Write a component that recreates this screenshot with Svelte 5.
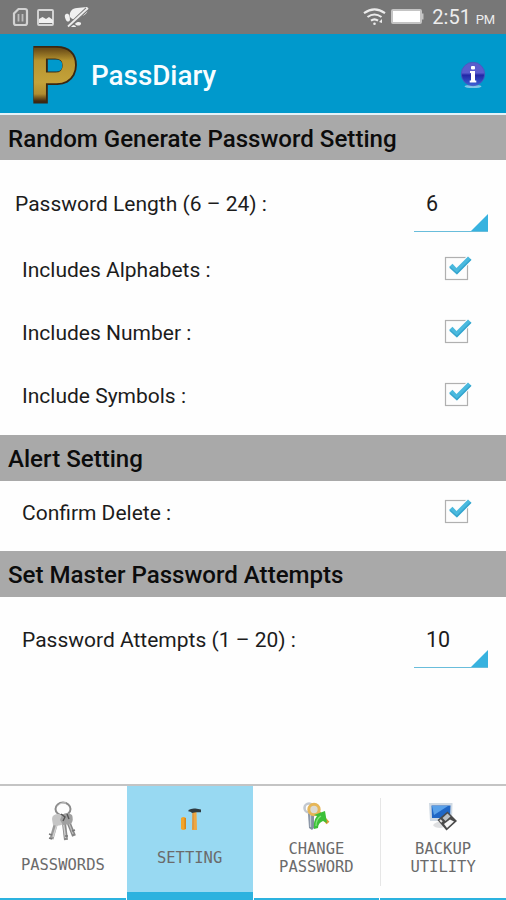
<script lang="ts">
  const passwordLength = 6;
  const passwordAttempts = 10;

  const includes = $state([
    { label: 'Includes Alphabets :', checked: true },
    { label: 'Includes Number :', checked: true },
    { label: 'Include Symbols :', checked: true }
  ]);

  let confirmDelete = $state(true);
  let activeTab = $state('setting');

  const tabs = [
    { id: 'passwords', lines: ['PASSWORDS'] },
    { id: 'setting', lines: ['SETTING'] },
    { id: 'change', lines: ['CHANGE', 'PASSWORD'] },
    { id: 'backup', lines: ['BACKUP', 'UTILITY'] }
  ];
</script>

{#snippet checkbox(checked: boolean, toggle: () => void, label: string)}
  <button class="checkbox" onclick={toggle} role="checkbox" aria-checked={checked} aria-label={label}>
    <svg width="30" height="28" viewBox="0 0 30 28">
      <rect x="2.500" y="3.500" width="22" height="22" fill="#fdfdfd" stroke="#b0b0b0" stroke-width="1.200" />
      {#if checked}
        <path d="M6 13l3.500-3.300 4 4.300L25 2.500l3.500 3.300L14 20.500z" fill="#4ab9de" stroke="#fdfdfd" stroke-width="2" paint-order="stroke" />
        <path d="M7 13.500l6.800 6L27.800 5.500" fill="none" stroke="#2c9dc8" stroke-width="1.600" opacity=".7" />
      {/if}
    </svg>
  </button>
{/snippet}

{#snippet spinner(value: number)}
  <div class="spinner">
    <span class="spinner__value">{value}</span>
    <svg class="spinner__arrow" width="17" height="17" viewBox="0 0 17 17">
      <path d="M17 0v17H0z" fill="#37b2df" />
    </svg>
  </div>
{/snippet}

<div class="app">
  <div class="status">
    <div class="status__group">
      <svg width="78" height="24" viewBox="0 0 78 24">
        <path d="M6.500 4H13q2 0 2 2v12q0 2-2 2H4q-2 0-2-2V8.500z" fill="none" stroke="#d2d2d2" stroke-width="2.200" />
        <path d="M6.500 9v7.500M10.500 9v7.500" stroke="#bdbdbd" stroke-width="1.800" />
        <rect x="26" y="5" width="15" height="15" rx="1" fill="none" stroke="#d6d6d6" stroke-width="1.900" />
        <path d="M27 18v-4l3.500-2 3.500 2 3-2 4 3v3H27z" fill="#f0f0f0" />
        <path d="M58 12c-1-5 2-9 7-9l10-1c2 4-1 8-5 9-4 4-8 5-12 1z" fill="#f0f0f0" />
        <path d="M54 9c3-1 4 2 4 6-1 2-3 2-4 0s-2-5 0-6zM63 19c2-3 7-2 6 0s-4 2-6 0zM58 21c2-2 6-1 6 1h-6z" fill="#f0f0f0" />
        <path d="M75 4L56 22" stroke="#777" stroke-width="4" />
        <path d="M76 3L56 21.500" stroke="#ececec" stroke-width="1.800" />
      </svg>
    </div>
    <div class="status__group status__group--right">
      <svg width="63" height="20" viewBox="0 0 63 20">
        <g fill="none" stroke="#ececec" stroke-width="2.1">
          <path d="M1 6.2q10.5-7.6 21 0" />
          <path d="M4.5 10q7-5 14 0" />
          <path d="M8 13.6q3.5-2.6 7 0" />
        </g>
        <circle cx="11.5" cy="16.7" r="1.3" fill="#ececec" />
        <path d="M16 15l3-3v4z" fill="#ececec" />
        <path d="M30 2h27q2 0 2 2v2.500h1.500v6H59V15q0 2-2 2H30q-2 0-2-2V4q0-2 2-2z" fill="#c4c4c4" />
        <rect x="30" y="4" width="27" height="11" fill="#fff" />
      </svg>
      <span class="status__time">2:51 <small>PM</small></span>
    </div>
  </div>

  <header class="header">
    <svg class="header__logo" width="58" height="93" viewBox="0 0 58 93">
      <defs>
        <linearGradient id="gold" x1="0" y1="0" x2="0" y2="1">
          <stop offset=".2" stop-color="#6b4d18" />
          <stop offset=".34" stop-color="#b7942f" />
          <stop offset=".6" stop-color="#c4a23a" />
          <stop offset=".74" stop-color="#b08d30" />
          <stop offset=".82" stop-color="#4a3010" />
        </linearGradient>
      </defs>
      <text class="logo logo--edge" x="4" y="73.500" textLength="46" lengthAdjust="spacingAndGlyphs">P</text>
      <text class="logo logo--face" x="3.500" y="73">P</text>
    </svg>
    <h1 class="header__title">PassDiary</h1>
    <button class="header__info" aria-label="Info">
      <svg width="26" height="28" viewBox="0 0 26 28">
        <defs>
          <linearGradient id="ball" x1="0" y1="0" x2="0" y2="1">
            <stop offset="0" stop-color="#5a5fcb" />
            <stop offset=".45" stop-color="#5a5ccf" />
            <stop offset=".55" stop-color="#2226a6" />
            <stop offset="1" stop-color="#3a63d8" />
          </linearGradient>
        </defs>
        <ellipse cx="13" cy="25.500" rx="8.500" ry="1.600" fill="#80c5e8" />
        <circle cx="13" cy="13" r="11.7" fill="url(#ball)" stroke="#4a57bd" stroke-width=".8" />
        <rect x="11" y="5" width="4" height="3.500" rx="1" fill="#fff" />
        <path d="M10 10h5v9.500h1.300v2H9.700v-2H11V12h-1z" fill="#fff" />
      </svg>
    </button>
  </header>

  <main class="content">
    <h2 class="section section--first">Random Generate Password Setting</h2>
    <div class="row row--length">
      <span class="row__label">Password Length (6 – 24) :</span>
      {@render spinner(passwordLength)}
    </div>
    {#each includes as item}
      <div class="row row--check">
        <span class="row__label">{item.label}</span>
        {@render checkbox(item.checked, () => (item.checked = !item.checked), item.label)}
      </div>
    {/each}

    <h2 class="section section--alert">Alert Setting</h2>
    <div class="row row--confirm">
      <span class="row__label">Confirm Delete :</span>
      {@render checkbox(confirmDelete, () => (confirmDelete = !confirmDelete), 'Confirm Delete')}
    </div>

    <h2 class="section">Set Master Password Attempts</h2>
    <div class="row row--attempts">
      <span class="row__label">Password Attempts (1 – 20) :</span>
      {@render spinner(passwordAttempts)}
    </div>
  </main>

  <nav class="tabs">
    {#each tabs as tab}
      <button class="tab tab--{tab.id}" class:tab--active={activeTab === tab.id} onclick={() => (activeTab = tab.id)}>
        {#if tab.id === 'passwords'}
          <svg width="32" height="42" viewBox="0 0 32 42">
            <ellipse cx="16" cy="8" rx="7.5" ry="6.5" fill="none" stroke="#8b8b8b" stroke-width="2" />
            <path d="M10 6q3-5 9-4" fill="none" stroke="#d5d5d5" stroke-width="1" />
            <path d="M9 22L4.5 38" stroke="#9a9a9a" stroke-width="4" />
            <path d="M10 23L6 36" stroke="#d0d0d0" stroke-width="1.5" />
            <path d="M17 22l2 17" stroke="#8a8a8a" stroke-width="4" />
            <path d="M16.5 22l2 15" stroke="#cecece" stroke-width="1.5" />
            <path d="M21 20l6 15" stroke="#858585" stroke-width="4" />
            <path d="M21 20l5 13" stroke="#bdbdbd" stroke-width="1.3" />
            <path d="M5 18q0-5 7-5l6 3-1 7q-6 3-11 1z" fill="#c5c5c5" />
            <path d="M15 14q5-4 10 0 2 5-1 9l-8 1-3-5z" fill="#a0a0a0" />
            <path d="M14 13l4 3-2 4M20 13l2 5" fill="none" stroke="#555" stroke-width="1.4" />
            <path d="M2 33l3 1M2 37l3 1M21 35h-3M28 29l-3 1" stroke="#777" stroke-width="1.4" />
          </svg>
        {:else if tab.id === 'setting'}
          <svg width="26" height="26" viewBox="0 0 26 26">
            <path d="M4 12q2.500-2 5 0v11q-2.500 2-5 0z" fill="#f3a52a" />
            <path d="M8.200 12v11" stroke="#d0831c" stroke-width="1.300" />
            <path d="M15.500 6h4l.5 18h-5z" fill="#eea743" />
            <path d="M16 7v16.500" stroke="#d08a3c" stroke-width="1" />
            <path d="M11.500 4q3-2 7-1.500l5.500 1v2.800h-5l-4 .7q-1-2-3.500-1.500z" fill="#2f3b41" />
          </svg>
        {:else if tab.id === 'change'}
          <svg width="28" height="30" viewBox="0 0 28 30">
            <path d="M6 12h6v15l-2 2-3-2z" fill="#8490a0" />
            <path d="M8.500 13v13" stroke="#c3cad4" stroke-width="1.300" />
            <circle cx="7" cy="7" r="4.500" fill="none" stroke="#c2c8d0" stroke-width="2.600" />
            <path d="M15 10l11 12" stroke="#dc9c36" stroke-width="3.800" />
            <circle cx="12" cy="8.500" r="5.200" fill="#dcdad2" stroke="#e6b658" stroke-width="3" />
            <path d="M12 28q-1-8 3-13l-3-1 11-4 2 12-4-2q-5 2-5 7z" fill="#3cc038" />
            <path d="M14 25q0-7 5-10" fill="none" stroke="#85e47c" stroke-width="1.200" />
          </svg>
        {:else}
          <svg width="30" height="30" viewBox="0 0 30 30">
            <path d="M5 24q4-4 9-4l5 5-6 2q-7 0-8-3z" fill="#dedfe1" />
            <path d="M1 2h23.500l-.5 18H2z" fill="#cfd9e3" />
            <path d="M3.500 4.500h19L22 17H4z" fill="#1f66c5" />
            <path d="M4 5h16L6 14z" fill="#5aa1e9" />
            <path d="M19.500 10.500L29 20 18.500 29.500 9.500 19z" fill="#4a4a4a" />
            <path d="M19.500 12.500l3 3-5 4.500-3-3z" fill="#bcc0c4" />
            <path d="M22 18.500l4 2-7 6.500-3-4z" fill="#f5f5f5" />
            <path d="M12 19l2 2" stroke="#dedede" stroke-width="2" />
          </svg>
        {/if}
        <span class="tab__text">
          {#each tab.lines as line}<span>{line}</span>{/each}
        </span>
      </button>
    {/each}
  </nav>
</div>

<style>
  :global(body) {
    background: #fefefe;
  }

  .app {
    width: 506px;
    height: 900px;
    display: flex;
    flex-direction: column;
    overflow: hidden;
    background: #fefefe;
    color: #1c1c1c;
    font-family: Roboto, sans-serif;
  }

  button {
    background: none;
    border: none;
    padding: 0;
    color: inherit;
    cursor: pointer;
  }

  svg {
    display: block;
    flex-shrink: 0;
  }

  .status {
    height: 34px;
    box-sizing: border-box;
    padding: 0 11px 0 12px;
    display: flex;
    align-items: center;
    justify-content: space-between;
    background: #777;
  }

  .status__group {
    display: flex;
    align-items: center;
  }

  .status__group--right {
    gap: 6px;
  }

  .status__time {
    color: #ededed;
    font-size: 20px;
    line-height: 34px;
    padding-top: 3px;
    white-space: nowrap;
  }

  .status__time small {
    font-size: 13px;
    letter-spacing: -0.2px;
  }

  .header {
    height: 81px;
    box-sizing: border-box;
    padding: 0 20px 0 27px;
    display: flex;
    align-items: center;
    background: #0099cc;
    border-bottom: 2px solid #e4f2f8;
  }

  .logo {
    font-family: "Liberation Sans", sans-serif;
    font-weight: bold;
    font-size: 76px;
  }

  .logo--edge {
    fill: #3b2711;
    stroke: #3b2711;
    stroke-width: 5px;
  }

  .logo--face {
    font-size: 75px;
    fill: url(#gold);
    stroke: url(#gold);
    stroke-width: 2.5px;
    transform: scaleX(0.92);
  }

  .header__title {
    flex: 1;
    margin: 0 0 0 6px;
    padding-top: 3px;
    color: #f8fdff;
    font-size: 27.8px;
    font-weight: 500;
  }

  .header__info {
    padding-top: 2px;
  }

  .content {
    flex: 1;
  }

  .section {
    height: 46px;
    margin: 0;
    padding-left: 8px;
    background: #a9a9a9;
    color: #0c0c0c;
    font-size: 24.1px;
    font-weight: 500;
    line-height: 48px;
    white-space: nowrap;
  }

  .section--first {
    height: 45px;
    line-height: 48px;
  }

  .row {
    display: flex;
    box-sizing: border-box;
    align-items: center;
    justify-content: space-between;
    padding: 0 18px 0 22px;
    font-size: 21px;
  }

  .row__label {
    white-space: nowrap;
  }

  .row--length {
    height: 78px;
    padding-left: 15px;
    padding-top: 9px;
  }

  .row--check {
    height: 63px;
    padding-top: 1px;
  }

  .row--check,
  .row--confirm {
    padding-right: 33px;
  }

  .checkbox {
    margin-bottom: 4px;
  }

  .section--alert {
    margin-top: 8px;
  }

  .row--confirm {
    height: 70px;
    padding-bottom: 6px;
  }

  .row--attempts {
    height: 86px;
  }

  .spinner {
    width: 74px;
    height: 56px;
    box-sizing: border-box;
    padding-left: 12px;
    display: flex;
    align-items: center;
    justify-content: space-between;
    border-bottom: 1px solid #69bddb;
  }

  .spinner__value {
    font-size: 21.5px;
  }

  .spinner__arrow {
    align-self: flex-end;
  }

  .tabs {
    height: 116px;
    box-sizing: border-box;
    display: grid;
    grid-template-columns: repeat(4, 1fr);
    column-gap: 1px;
    border-top: 2px solid #c4c4c4;
  }

  .tab {
    display: flex;
    flex-direction: column;
    align-items: center;
    border-bottom: 2px solid #2cb2df;
    color: #6b6b6b;
  }

  .tab--active {
    background: #98d9f2;
    border-bottom-width: 8px;
  }

  .tab--passwords {
    padding-top: 15px;
    gap: 13px;
  }

  .tab--setting {
    padding-top: 20px;
    gap: 17px;
  }

  .tab--change,
  .tab--backup {
    padding-top: 15px;
    gap: 9px;
  }

  .tab--backup {
    background: linear-gradient(#e6e6e6, #e6e6e6) 0 12px / 1px 88px no-repeat;
  }

  .tab__text {
    display: flex;
    flex-direction: column;
    font-family: "DejaVu Sans Mono", monospace;
    font-size: 15.5px;
    line-height: 18px;
  }
</style>
